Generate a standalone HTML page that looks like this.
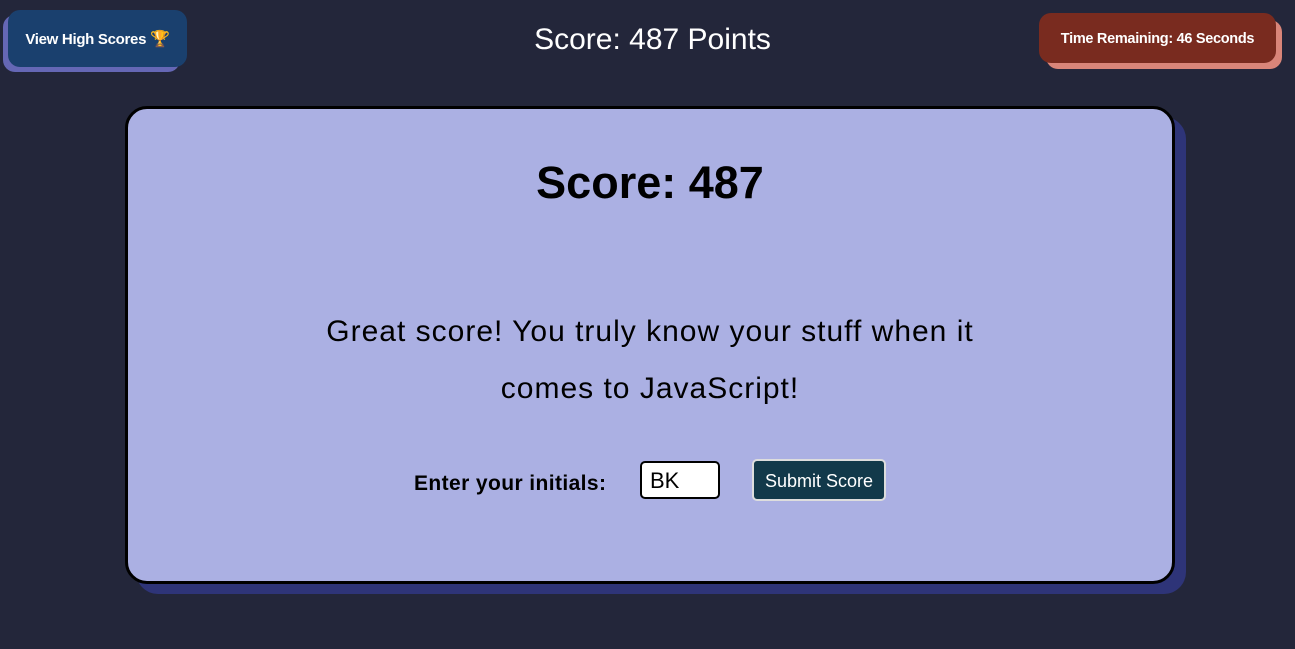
<!DOCTYPE html>
<html><head><style>
body{margin:0;width:1295px;height:649px;background:#23263a;font-family:"Liberation Sans",sans-serif;position:relative;overflow:hidden}
.a{position:absolute}
</style></head><body>
<div class="a" style="left:3px;top:15px;width:177px;height:57px;background:#6567b5;border-radius:12px"></div>
<div class="a" style="left:8px;top:10px;width:179px;height:57px;background:#1a406e;border-radius:12px;color:#fff;font-size:15px;font-weight:bold;line-height:60px;text-align:center;letter-spacing:-0.3px">View High Scores <span style="font-size:16px">🏆</span></div>
<div class="a" style="left:1046px;top:20px;width:236px;height:49px;background:#d98579;border-radius:12px"></div>
<div class="a" style="left:1039px;top:13px;width:237px;height:50px;background:#792b1f;border-radius:12px;color:#fff;font-size:14.5px;font-weight:bold;line-height:52px;text-align:center;letter-spacing:-0.3px">Time Remaining: 46 Seconds</div>
<div class="a" style="left:0;width:1295px;top:20px;text-align:center;color:#fff;font-size:30px;line-height:40px;padding-left:10px;box-sizing:border-box">Score: 487 Points</div>
<div class="a" style="left:136px;top:117px;width:1050px;height:477px;background:#2e3478;border-radius:22px"></div>
<div class="a" style="left:125px;top:106px;width:1044px;height:472px;background:#abb0e3;border:3px solid #000;border-radius:22px">
 <div class="a" style="left:0;width:100%;top:48px;text-align:center;font-size:45px;font-weight:bold;line-height:52px">Score: 487</div>
 <div class="a" style="left:177px;width:690px;top:194px;text-align:center;font-size:30px;letter-spacing:1px;line-height:57px">Great score! You truly know your stuff when it comes to JavaScript!</div>
 <div class="a" style="left:286px;top:361px;font-size:21px;font-weight:bold;line-height:28px;letter-spacing:0.4px">Enter your initials:</div>
 <div class="a" style="left:512px;top:352px;width:80px;height:38px;background:#fff;border:2px solid #000;border-radius:5px;font-size:22px;line-height:36px;padding-left:8px;box-sizing:border-box">BK</div>
 <div class="a" style="left:624px;top:350px;width:134px;height:42px;background:#12394a;border:2px solid #ddd;border-radius:5px;box-sizing:border-box;color:#fff;font-size:18px;line-height:40px;text-align:center">Submit Score</div>
</div>
</body></html>
